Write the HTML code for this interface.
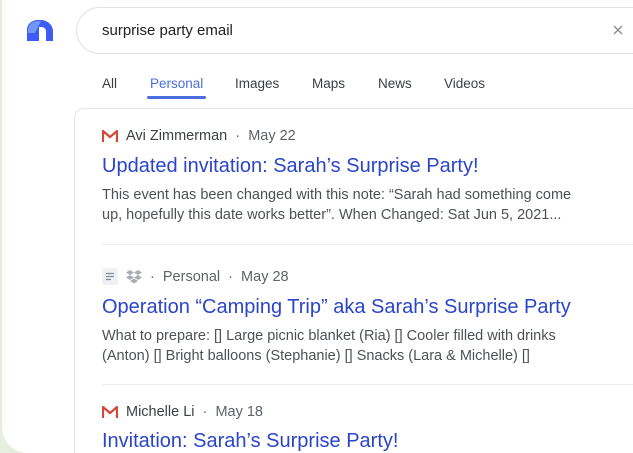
<!DOCTYPE html>
<html><head><meta charset="utf-8"><style>
*{margin:0;padding:0;box-sizing:border-box}
html,body{width:633px;height:453px;overflow:hidden;background:#e6eedd;font-family:"Liberation Sans",Arial,sans-serif}
#wrap{position:relative;width:633px;height:453px;overflow:hidden}
.panel{position:absolute;left:2px;top:0;width:631px;height:453px;background:#fff;border-bottom-left-radius:26px}
.abs{position:absolute;white-space:nowrap}
.search{position:absolute;left:76px;top:7px;width:557px;height:47px;border:1px solid #dfe1e5;border-right:none;border-radius:24px 0 0 24px;background:#fff}
.tab{position:absolute;top:76px;font-size:13.5px;color:#3c4043}
.card{position:absolute;left:74px;top:108px;width:559px;height:345px;border:1px solid #e6e6e6;border-right:none;border-bottom:none;border-radius:10px 0 0 0;background:#fff}
.meta{font-size:14.5px;color:#5f6368}
.meta b{font-weight:normal;color:#3c4043}
.title{font-size:20px;color:#2a45c9}
.snip{font-size:14.5px;color:#4d5156}
.sep{position:absolute;left:102px;width:531px;height:1px;background:#ececec}
</style></head><body><div id="wrap">
<div class="panel"></div>
<svg class="abs" style="left:27px;top:20px" width="26" height="21" viewBox="0 0 26 21">
<path d="M0 21V10C0 4 5 0 11 0H14C20 0 26 5 26 11V21H19V11C19 9 17 7 15 7H12V21Z" fill="#3d5cf5"/>
<path d="M1 10C1 5 5 1 11 1H14L8 13H1Z" fill="#7196f6"/>
<rect x="0" y="14" width="7" height="7" fill="#3d5cf5"/>
</svg>
<div class="search"></div>
<div class="abs" style="left:102px;top:22px;font-size:15px;color:#202124">surprise party email</div>
<svg class="abs" style="left:613px;top:25px" width="10" height="10" viewBox="0 0 10 10"><path d="M1 1L9 9M9 1L1 9" stroke="#8a8d91" stroke-width="1.4"/></svg>
<div class="tab" style="left:102px">All</div>
<div class="tab" style="left:150px;color:#4a6ee0">Personal</div>
<div class="abs" style="left:147px;top:96px;width:59px;height:3px;border-radius:2px;background:#4a6ee0"></div>
<div class="tab" style="left:235px">Images</div>
<div class="tab" style="left:312px">Maps</div>
<div class="tab" style="left:378px">News</div>
<div class="tab" style="left:444px">Videos</div>
<div class="card"></div>

<svg class="abs" style="left:102px;top:130px" width="16" height="12" viewBox="0 0 16 12"><path d="M1 12V1L8 7L15 1V12" fill="none" stroke="#d44638" stroke-width="2.2"/></svg>
<div class="abs meta" style="left:126px;top:128px"><b>Avi Zimmerman</b> &nbsp;·&nbsp; May 22</div>
<div class="abs title" style="left:102px;top:155px">Updated invitation: Sarah’s Surprise Party!</div>
<div class="abs snip" style="left:102px;top:187px">This event has been changed with this note: “Sarah had something come</div>
<div class="abs snip" style="left:102px;top:207px">up, hopefully this date works better”. When Changed: Sat Jun 5, 2021...</div>
<div class="sep" style="top:244px"></div>

<div class="abs" style="left:102px;top:268px;width:16px;height:17px;background:#eef0f4;border-radius:3px"></div>
<svg class="abs" style="left:105px;top:272px" width="10" height="9"><path d="M1 1.5H9M1 4.5H9M1 7.5H6" stroke="#7d8a99" stroke-width="1.3"/></svg>
<svg class="abs" style="left:126px;top:270px" width="16" height="14" viewBox="0 0 16 14"><path d="M4 0L0 2.5L4 5L8 2.5ZM12 0L8 2.5L12 5L16 2.5ZM0 7.5L4 10L8 7.5L4 5ZM16 7.5L12 10L8 7.5L12 5ZM4 11L8 13.5L12 11L8 8.5Z" fill="#a9adb3"/></svg>
<div class="abs meta" style="left:150px;top:269px">· &nbsp;Personal &nbsp;·&nbsp; May 28</div>
<div class="abs title" style="left:102px;top:296px">Operation “Camping Trip” aka Sarah’s Surprise Party</div>
<div class="abs snip" style="left:102px;top:328px">What to prepare: [] Large picnic blanket (Ria) [] Cooler filled with drinks</div>
<div class="abs snip" style="left:102px;top:348px">(Anton) [] Bright balloons (Stephanie) [] Snacks (Lara &amp; Michelle) []</div>
<div class="sep" style="top:384px"></div>

<svg class="abs" style="left:102px;top:406px" width="16" height="12" viewBox="0 0 16 12"><path d="M1 12V1L8 7L15 1V12" fill="none" stroke="#d44638" stroke-width="2.2"/></svg>
<div class="abs meta" style="left:126px;top:404px"><b>Michelle Li</b> &nbsp;·&nbsp; May 18</div>
<div class="abs title" style="left:102px;top:430px;line-height:23px;height:23px">Invitation: Sarah’s Surprise Party!</div>
</div></body></html>
